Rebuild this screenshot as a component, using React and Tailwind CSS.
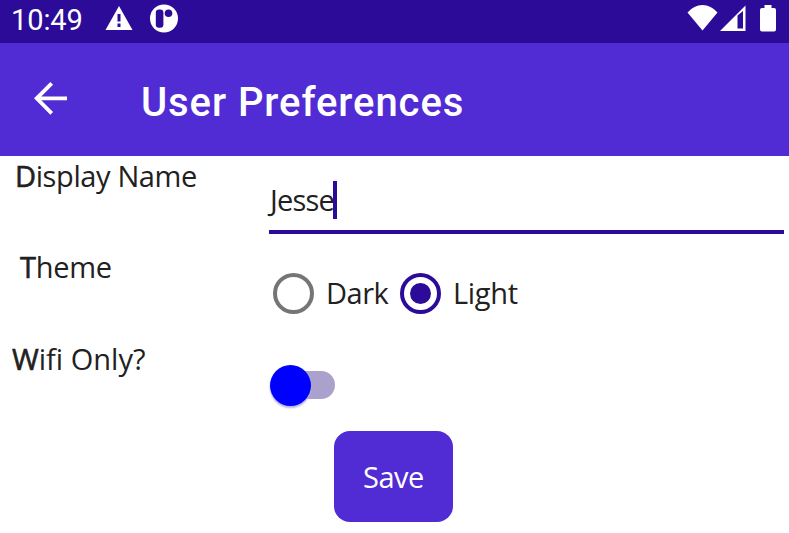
import React from "react";

function StatusBar() {
  return (
    <div className="flex h-[43px] items-start bg-[#2b0b98] text-white">
      <span className="ml-[11px] mt-[3px] w-[72px] whitespace-nowrap font-['Roboto',sans-serif] text-[29px] leading-[34px] tracking-[-0.1px]">
        10:49
      </span>
      <svg className="ml-[22px] mt-[5px]" width="28" height="26" viewBox="0 0 28 26" fill="none">
        <path d="M14 1L27.500 25H.5Z" fill="#fff" />
        <path d="M14 9v7.500M14 18.500v3.500" stroke="#2b0b98" strokeWidth="3" />
      </svg>
      <svg className="ml-[16px] mt-[4px]" width="30" height="30" viewBox="0 0 30 30">
        <circle cx="15" cy="14.500" r="14" fill="#fff" />
        <rect x="6.800" y="5.500" width="7.600" height="18.300" rx="3.200" fill="#2b0b98" />
        <circle cx="19.500" cy="9.200" r="3.800" fill="#2b0b98" />
      </svg>
      <div className="ml-auto flex">
        <svg className="mt-[4px]" width="32" height="28" viewBox="0 0 32 28">
          <path d="M15.500 26.500L.5 8.500Q7 1 15.500 1T30.500 8.500Z" fill="#fff" />
        </svg>
        <svg className="ml-[1px] mt-[4px]" width="26" height="28" viewBox="0 0 26 28">
          <path fillRule="evenodd" d="M0 27L25.500 1.500V27ZM17.500 11.500V24.500H23V7Z" fill="#fff" />
        </svg>
        <svg className="ml-[13px] mr-[12px] mt-[4px]" width="18" height="28" viewBox="0 0 18 28">
          <path d="M5.500 1H12.500V4H15Q17 4 17 6V25.500Q17 27.500 15 27.500H3Q1 27.500 1 25.500V6Q1 4 3 4H5.500Z" fill="#fff" />
        </svg>
      </div>
    </div>
  );
}

function AppBar() {
  return (
    <header className="flex h-[113px] items-start bg-[#512bd4] text-white">
      <svg className="ml-[33px] mt-[38px]" width="36" height="36" viewBox="0 0 36 36" fill="none" stroke="#fff" strokeWidth="3.8">
        <path d="M34 17.300H4.500M18.700 2.300L3.700 17.300L18.700 32.300" />
      </svg>
      <h1 className="ml-[72px] mt-[36px] whitespace-nowrap font-['Roboto',sans-serif] text-[40px] font-medium leading-[48px] tracking-[0.93px]">
        User Preferences
      </h1>
    </header>
  );
}

function Label({ first, rest, className }) {
  return (
    <div className={`w-[269px] shrink-0 whitespace-nowrap leading-[40px] ${className}`}>
      <span className="[-webkit-text-stroke:0.6px_#212121]">{first}</span>
      {rest}
    </div>
  );
}

export default function App() {
  return (
    <div className="flex h-[533px] w-[789px] flex-col overflow-hidden bg-white font-['Open_Sans',sans-serif] text-[29px] text-[#212121]">
      <StatusBar />
      <AppBar />
      <main className="flex flex-col">
        <div className="flex h-[91px]">
          <Label first="D" rest="isplay Name" className="pl-[15px] tracking-[-0.38px]" />
          <div className="mr-[5px] flex h-[78px] flex-1 items-start border-b-4 border-[#2b0b98] pt-[24px]">
            <span className="w-[64px] pl-px leading-[40px] tracking-[-0.8px]">Jesse</span>
            <span className="mt-px h-[38px] w-[4px] bg-[#2b0b98]" />
          </div>
        </div>
        <div className="flex h-[92px]">
          <Label first="T" rest="heme" className="pl-[20px] tracking-[-0.3px]" />
          <div className="flex h-[92px] items-center pl-[4px] pt-px">
            <span className="h-[41px] w-[41px] rounded-full border-4 border-[#757575]" />
            <span className="mb-[2px] ml-[12px] w-[74px] leading-[40px] tracking-[-0.5px]">Dark</span>
            <span className="flex h-[41px] w-[41px] items-center justify-center rounded-full border-4 border-[#2b0b98]">
              <span className="h-[21px] w-[21px] rounded-full bg-[#2b0b98]" />
            </span>
            <span className="mb-[2px] ml-[12px] leading-[40px] tracking-[-0.3px]">Light</span>
          </div>
        </div>
        <div className="flex h-[92px]">
          <Label first="W" rest="ifi Only?" className="pl-[12px]" />
          <div className="flex items-center pl-[1px]">
            <span className="z-10 h-[41px] w-[41px] rounded-full bg-[#0000ff] shadow-[0_2px_2px_#b9aee0]" />
            <span className="-ml-[20px] h-[28px] w-[44px] rounded-full bg-[#aaa1cc]" />
          </div>
        </div>
        <button className="ml-[334px] flex h-[91px] w-[119px] items-start justify-center rounded-[16px] bg-[#512bd4] pt-[26px] leading-[40px] tracking-[-0.5px] text-white">
          Save
        </button>
      </main>
    </div>
  );
}
